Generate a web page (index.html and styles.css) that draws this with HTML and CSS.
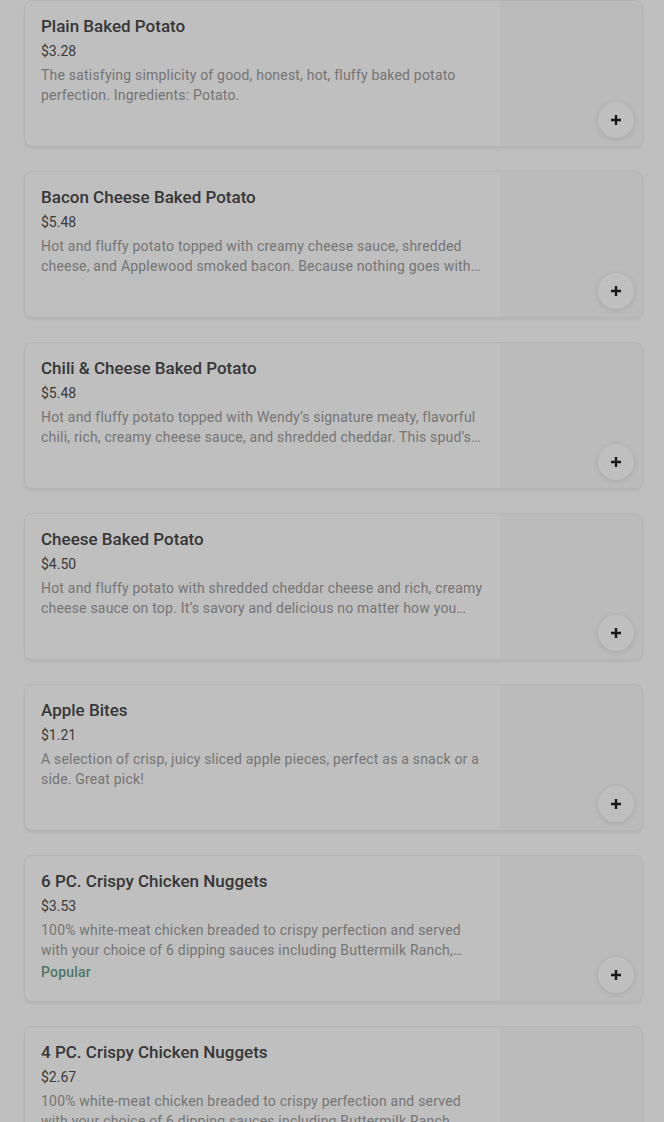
FILE: index.html
```html
<!DOCTYPE html>
<html lang="en">
<head>
    <meta charset="UTF-8">
    <meta name="viewport" content="width=device-width, initial-scale=1.0">
    <title>Menu</title>
    <link rel="stylesheet" href="styles.css">
</head>
<body>
    <div class="menu-list">
        <div class="menu-item">
            <div class="item-info">
                <div class="item-title">Plain Baked Potato</div>
                <div class="item-price">$3.28</div>
                <div class="item-desc">The satisfying simplicity of good, honest, hot, fluffy baked potato perfection. Ingredients: Potato.</div>
            </div>
            <div class="item-image"></div>
            <button class="add-btn"><svg viewBox="0 0 12 12" width="12" height="12"><path d="M6 1v10M1 6h10" /></svg></button>
        </div>
        <div class="menu-item">
            <div class="item-info">
                <div class="item-title">Bacon Cheese Baked Potato</div>
                <div class="item-price">$5.48</div>
                <div class="item-desc">Hot and fluffy potato topped with creamy cheese sauce, shredded cheese, and Applewood smoked bacon. Because nothing goes with potatoes like bacon and cheese.</div>
            </div>
            <div class="item-image"></div>
            <button class="add-btn"><svg viewBox="0 0 12 12" width="12" height="12"><path d="M6 1v10M1 6h10" /></svg></button>
        </div>
        <div class="menu-item">
            <div class="item-info">
                <div class="item-title">Chili &amp; Cheese Baked Potato</div>
                <div class="item-price">$5.48</div>
                <div class="item-desc">Hot and fluffy potato topped with Wendy’s signature meaty, flavorful chili, rich, creamy cheese sauce, and shredded cheddar. This spud’s a meal all by itself.</div>
            </div>
            <div class="item-image"></div>
            <button class="add-btn"><svg viewBox="0 0 12 12" width="12" height="12"><path d="M6 1v10M1 6h10" /></svg></button>
        </div>
        <div class="menu-item">
            <div class="item-info">
                <div class="item-title">Cheese Baked Potato</div>
                <div class="item-price">$4.50</div>
                <div class="item-desc">Hot and fluffy potato with shredded cheddar cheese and rich, creamy cheese sauce on top. It’s savory and delicious no matter how you skin it.</div>
            </div>
            <div class="item-image"></div>
            <button class="add-btn"><svg viewBox="0 0 12 12" width="12" height="12"><path d="M6 1v10M1 6h10" /></svg></button>
        </div>
        <div class="menu-item">
            <div class="item-info">
                <div class="item-title">Apple Bites</div>
                <div class="item-price">$1.21</div>
                <div class="item-desc">A selection of crisp, juicy sliced apple pieces, perfect as a snack or a side. Great pick!</div>
            </div>
            <div class="item-image"></div>
            <button class="add-btn"><svg viewBox="0 0 12 12" width="12" height="12"><path d="M6 1v10M1 6h10" /></svg></button>
        </div>
        <div class="menu-item">
            <div class="item-info">
                <div class="item-title">6 PC. Crispy Chicken Nuggets</div>
                <div class="item-price">$3.53</div>
                <div class="item-desc">100% white-meat chicken breaded to crispy perfection and served with your choice of 6 dipping sauces including Buttermilk Ranch, Honey Mustard and more.</div>
                <div class="item-tag">Popular</div>
            </div>
            <div class="item-image"></div>
            <button class="add-btn"><svg viewBox="0 0 12 12" width="12" height="12"><path d="M6 1v10M1 6h10" /></svg></button>
        </div>
        <div class="menu-item">
            <div class="item-info">
                <div class="item-title">4 PC. Crispy Chicken Nuggets</div>
                <div class="item-price">$2.67</div>
                <div class="item-desc">100% white-meat chicken breaded to crispy perfection and served with your choice of 6 dipping sauces including Buttermilk Ranch, Honey Mustard and more.</div>
            </div>
            <div class="item-image"></div>
            <button class="add-btn"><svg viewBox="0 0 12 12" width="12" height="12"><path d="M6 1v10M1 6h10" /></svg></button>
        </div>
    </div>
    <div class="backdrop"></div>
</body>
</html>
```

FILE: styles.css
```css
body {
    font-family: Roboto, "Noto Sans", sans-serif;
    background-color: #fff;
    margin: 0;
    overflow: hidden;
}

.menu-list {
    display: flex;
    flex-direction: column;
    gap: 24px;
    padding: 0 21px 0 24px;
}

.menu-item {
    position: relative;
    display: flex;
    height: 147px;
    box-sizing: border-box;
    border: 1px solid #f0f0f0;
    border-radius: 8px;
    background-color: #fff;
    box-shadow: 0 2px 3px rgba(0, 0, 0, 0.06);
    overflow: hidden;
}

.item-info {
    flex: 1;
    min-width: 0;
    padding: 13px 16px 0 16px;
}

.item-title {
    font-size: 17px;
    line-height: 24px;
    font-weight: 500;
    color: #4a4a4a;
}

.item-price {
    margin-top: 3px;
    font-size: 14px;
    line-height: 20px;
    color: #505050;
}

.item-desc {
    margin-top: 4px;
    font-size: 14px;
    line-height: 20px;
    letter-spacing: 0.2px;
    color: #9c9c9c;
    display: -webkit-box;
    -webkit-line-clamp: 2;
    -webkit-box-orient: vertical;
    overflow: hidden;
}

.item-tag {
    margin-top: 2px;
    font-size: 14px;
    line-height: 20px;
    font-weight: 500;
    letter-spacing: 0.2px;
    color: #679f8a;
}

.item-image {
    width: 142px;
    flex-shrink: 0;
    background-color: #fafafa;
}

.add-btn {
    position: absolute;
    right: 8px;
    bottom: 8px;
    width: 36px;
    height: 36px;
    border-radius: 50%;
    border: none;
    background-color: #fff;
    box-shadow: 0 1px 6px rgba(0, 0, 0, 0.12);
    padding: 0;
    display: flex;
    justify-content: center;
    align-items: center;
}

.add-btn svg {
    stroke: #222;
    stroke-width: 2.4;
}

.backdrop {
    position: fixed;
    inset: 0;
    background-color: rgba(0, 0, 0, 0.25);
}
```
